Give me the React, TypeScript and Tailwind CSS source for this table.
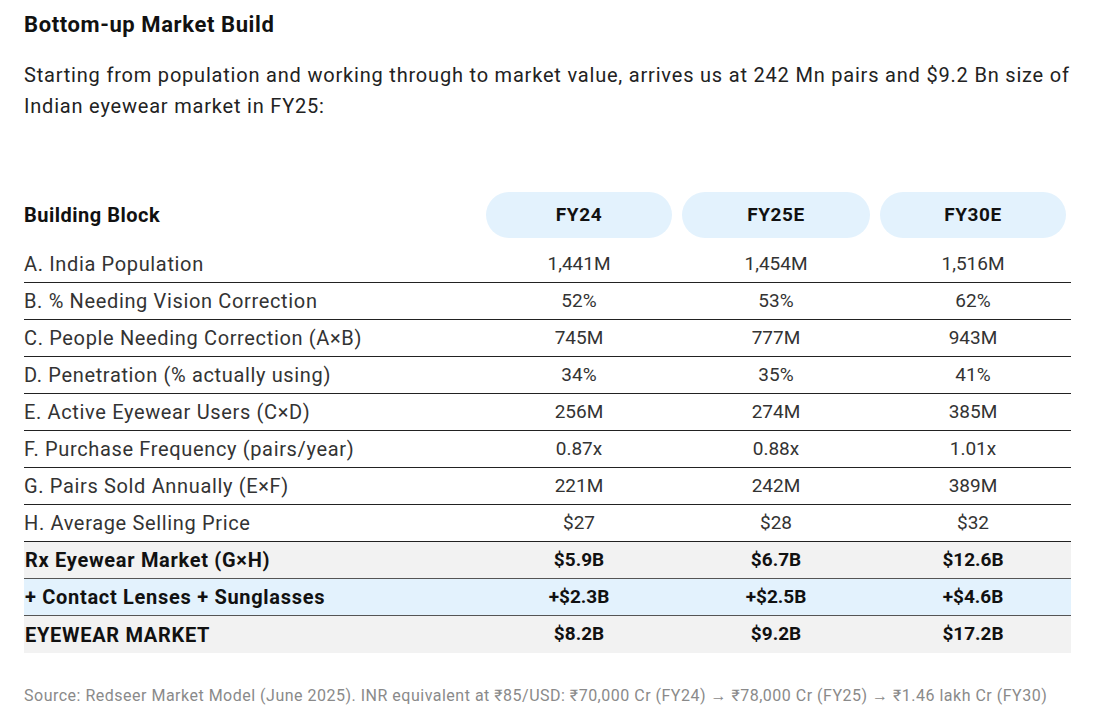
import React from "react";

const rows = [
  { label: "A. India Population", v: ["1,441M", "1,454M", "1,516M"] },
  { label: "B. % Needing Vision Correction", v: ["52%", "53%", "62%"] },
  { label: "C. People Needing Correction (A×B)", v: ["745M", "777M", "943M"] },
  { label: "D. Penetration (% actually using)", v: ["34%", "35%", "41%"] },
  { label: "E. Active Eyewear Users (C×D)", v: ["256M", "274M", "385M"] },
  { label: "F. Purchase Frequency (pairs/year)", v: ["0.87x", "0.88x", "1.01x"] },
  { label: "G. Pairs Sold Annually (E×F)", v: ["221M", "242M", "389M"] },
  { label: "H. Average Selling Price", v: ["$27", "$28", "$32"] },
];

const totals = [
  { label: "Rx Eyewear Market (G×H)", v: ["$5.9B", "$6.7B", "$12.6B"], bg: "bg-[#f2f2f2]" },
  { label: "+ Contact Lenses + Sunglasses", v: ["+$2.3B", "+$2.5B", "+$4.6B"], bg: "bg-[#e3f2fd]" },
  { label: "EYEWEAR MARKET", v: ["$8.2B", "$9.2B", "$17.2B"], bg: "bg-[#f2f2f2]" },
];

const cols = "grid grid-cols-[457px_196px_198px_196px]";

export default function App() {
  return (
    <div className="min-h-screen bg-white px-[24px] pt-[11px] font-['Roboto',sans-serif] text-[#222]">
      <h2 className="text-[22px] leading-[28px] font-bold text-[#111] tracking-[0.6px]">
        Bottom-up Market Build
      </h2>
      <p className="mt-[21px] text-[20px] leading-[31px] text-[#222] tracking-[0.8px]">
        <span className="whitespace-nowrap">
          Starting from population and working through to market value, arrives us at 242 Mn pairs and $9.2 Bn size of
        </span>
        <br />
        Indian eyewear market in FY25:
      </p>

      <div className="mt-[70px] w-[1047px]">
        <div className={`${cols} items-center h-[54px] pb-[8px]`}>
          <div className="text-[20px] font-bold text-[#111] tracking-[0.5px]">Building Block</div>
          {["FY24", "FY25E", "FY30E"].map((h) => (
            <div key={h} className="px-[5px] h-full">
              <div className="h-full rounded-full bg-[#e3f2fd] flex items-center justify-center text-[19px] font-bold text-[#111] tracking-[0.6px]">
                {h}
              </div>
            </div>
          ))}
        </div>

        {rows.map((r) => (
          <div
            key={r.label}
            className={`${cols} items-center h-[37px] border-b border-[#222] text-[19px] text-[#333]`}
          >
            <div className="text-[20px] tracking-[0.65px]">{r.label}</div>
            {r.v.map((x, i) => (
              <div key={i} className="text-center">
                {x}
              </div>
            ))}
          </div>
        ))}

        {totals.map((r, idx) => (
          <div
            key={r.label}
            className={`${cols} items-center h-[37px] ${r.bg} ${
              idx < totals.length - 1 ? "border-b border-[#555]" : ""
            } text-[19px] font-bold text-[#111]`}
          >
            <div className="pl-[1px] text-[20px] tracking-[0.7px]">{r.label}</div>
            {r.v.map((x, i) => (
              <div key={i} className="text-center">
                {x}
              </div>
            ))}
          </div>
        ))}
      </div>

      <p className="mt-[33px] text-[16px] leading-[20px] text-[#8a8a8a] tracking-[0.5px] whitespace-nowrap">
        Source: Redseer Market Model (June 2025). INR equivalent at ₹85/USD: ₹70,000 Cr (FY24) → ₹78,000 Cr (FY25) → ₹1.46 lakh Cr (FY30)
      </p>
    </div>
  );
}
